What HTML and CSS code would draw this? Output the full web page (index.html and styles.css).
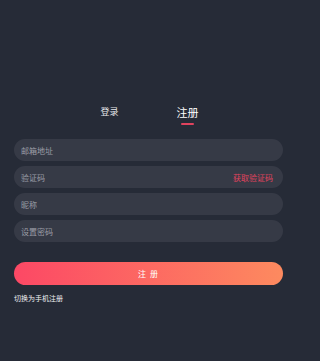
FILE: index.html
```html
<!DOCTYPE html>
<html lang="zh-CN">
<head>
<meta charset="utf-8">
<link rel="stylesheet" href="styles.css">
</head>
<body>
<div class="page">
  <div class="tabs">
    <div class="tab">登录</div>
    <div class="tab active">注册<span class="bar"></span></div>
  </div>
  <div class="form">
    <div class="field">邮箱地址</div>
    <div class="field code"><span>验证码</span><span class="get">获取验证码</span></div>
    <div class="field">昵称</div>
    <div class="field">设置密码</div>
  </div>
  <div class="btn">注 册</div>
  <div class="switch">切换为手机注册</div>
</div>
</body>
</html>
```
FILE: styles.css
```css
html, body {
  margin: 0;
  padding: 0;
  background: #262b37;
}
body {
  font-family: "Noto Sans CJK SC", "Noto Sans", sans-serif;
  width: 300px;
  height: 361px;
  overflow: hidden;
}
.page {
  padding: 104px 17px 0 14px;
}
.tabs {
  display: flex;
  justify-content: center;
  height: 21px;
}
.tab {
  width: 78px;
  display: flex;
  flex-direction: column;
  align-items: center;
  font-size: 9px;
  line-height: 16px;
  color: #e6e7ea;
}
.tab.active {
  font-size: 11px;
  color: #ffffff;
}
.bar {
  display: block;
  width: 13px;
  height: 2px;
  border-radius: 1px;
  margin-top: 3px;
  background: #e0435e;
}
.form {
  margin-top: 14px;
  display: flex;
  flex-direction: column;
  gap: 5px;
}
.field {
  height: 22px;
  border-radius: 11px;
  background: #363a46;
  padding: 0 10px 0 7px;
  display: flex;
  align-items: center;
  justify-content: space-between;
  font-size: 8px;
  color: #9c9ea6;
}
.field .get {
  color: #e0435e;
}
.btn {
  margin-top: 20px;
  height: 23px;
  border-radius: 12px;
  background: linear-gradient(90deg, #fc4865, #fd8a5f);
  color: #ffffff;
  font-size: 8px;
  display: flex;
  align-items: center;
  justify-content: center;
  letter-spacing: 1px;
}
.switch {
  margin-top: 8px;
  font-size: 7px;
  line-height: 10px;
  color: #f0f0f2;
}
```
